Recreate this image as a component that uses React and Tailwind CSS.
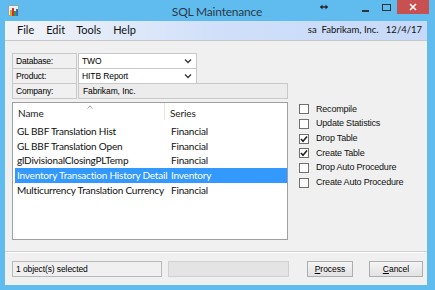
import React from "react";

const ui = { fontFamily: '"Liberation Sans", Arial, sans-serif' };
const seg = { fontFamily: 'Lato, "Noto Sans", sans-serif' };

function Check({ checked, label }) {
  return (
    <div className="flex items-center h-[14.7px]">
      <div className="w-[10px] h-[10px] border border-[#707070] bg-white flex items-center justify-center">
        {checked && (
          <svg width="8" height="8" viewBox="0 0 8 8">
            <path d="M1 4 L3 6.3 L7 1.4" stroke="#222" strokeWidth="1.6" fill="none" />
          </svg>
        )}
      </div>
      <span className="ml-[7px] text-[9px] text-[#111] tracking-[-0.2px]">{label}</span>
    </div>
  );
}

function Chevron() {
  return (
    <svg width="8" height="6" viewBox="0 0 8 6" className="mr-[4px]">
      <path d="M1 1.5 L4 4.5 L7 1.5" stroke="#333" strokeWidth="1.3" fill="none" />
    </svg>
  );
}

const lbl = "w-[65px] border border-[#c8c8c8] text-[8.5px] tracking-[-0.2px] pl-[3px] flex items-center";

export default function App() {
  const rows = [
    ["GL BBF Translation Hist", "Financial"],
    ["GL BBF Translation Open", "Financial"],
    ["glDivisionalClosingPLTemp", "Financial"],
    ["Inventory Transaction History Detail", "Inventory", true],
    ["Multicurrency Translation Currency", "Financial"],
  ];
  return (
    <div className="w-[435px] h-[290px] bg-[#60bcef] flex flex-col overflow-hidden" style={ui}>
      {/* title bar */}
      <div className="h-[21px] flex items-start relative shrink-0">
        <div className="mt-[5px] ml-[8px] w-[11px] h-[11px] relative">
          <div className="absolute inset-0 bg-[#e8eef5] border border-[#8aa]" />
          <div className="absolute left-[2px] bottom-0 w-[2px] h-[6px] bg-[#e0a020]" />
          <div className="absolute left-[4px] bottom-0 w-[2px] h-[8px] bg-[#d03030]" />
          <div className="absolute left-[6px] bottom-0 w-[2px] h-[5px] bg-[#30a040]" />
          <div className="absolute left-[8px] bottom-0 w-[2px] h-[7px] bg-[#3070d0]" />
        </div>
        <div className="w-[154px] ml-[121px] text-center text-[12px] tracking-[-0.2px] text-[#2b3a4a] mt-[3px]" style={seg}>SQL Maintenance</div>
        <div className="ml-[26px] mt-[4px]">
          <svg width="8" height="6" viewBox="0 0 8 6">
            <path d="M0.5 3 L7.5 3" stroke="#222" strokeWidth="1.4" />
            <path d="M0 3 L2.5 0.5 L2.5 5.5 Z M8 3 L5.5 0.5 L5.5 5.5 Z" fill="#222" />
          </svg>
        </div>
        <div className="ml-[34px] w-[7px] h-[2px] bg-[#333] mt-[10px]" />
        <div className="ml-[13px] w-[9px] h-[7px] border border-[#333] mt-[4px]" />
        <div className="ml-[6px] w-[32px] h-[14px] bg-[#c75050] flex items-center justify-center">
          <svg width="8" height="8" viewBox="0 0 8 8">
            <path d="M1 1 L7 7 M7 1 L1 7" stroke="white" strokeWidth="1.6" />
          </svg>
        </div>
      </div>

      {/* client */}
      <div className="ml-[5px] mr-[8px] h-[264px] bg-[#f0f0f0] flex flex-col">
        {/* menu */}
        <div className="h-[20px] bg-gradient-to-r from-[#f3f4f7] via-[#d0e0fa] to-[#c6d9f8] flex items-center border-b border-[#c8c8c8] text-[11px] text-[#111]" style={seg}>
          <span className="ml-[12px]">File</span>
          <span className="ml-[12px]">Edit</span>
          <span className="ml-[11px]">Tools</span>
          <span className="ml-[12px]">Help</span>
          <span className="ml-auto mr-[5px] text-[9.5px]">sa&nbsp;&nbsp;Fabrikam, Inc.&nbsp;&nbsp;&nbsp;12/4/17</span>
        </div>

        <div className="flex mt-[12px] ml-[7px]">
          {/* left column */}
          <div className="w-[276px] flex flex-col">
            <div className="flex h-[16px]">
              <div className={lbl}>Database:</div>
              <div className="w-[119px] ml-[1px] border border-[#c8c8c8] bg-white text-[8.5px] tracking-[-0.1px] pl-[3px] flex items-center justify-between">TWO<Chevron /></div>
            </div>
            <div className="flex h-[16px] -mt-px">
              <div className={lbl}>Product:</div>
              <div className="w-[119px] ml-[1px] border border-[#c8c8c8] bg-white text-[8.5px] tracking-[-0.1px] pl-[3px] flex items-center justify-between">HITB Report<Chevron /></div>
            </div>
            <div className="flex h-[16px] -mt-px">
              <div className={lbl}>Company:</div>
              <div className="flex-1 ml-[1px] border border-[#c8c8c8] bg-[#ececec] text-[8.5px] tracking-[-0.1px] pl-[4px] flex items-center">Fabrikam, Inc.</div>
            </div>

            {/* list */}
            <div className="mt-[3px] h-[138px] border border-[#a0a0a0] bg-white flex flex-col" style={seg}>
              <div className="h-[17px] flex text-[10px] tracking-[-0.1px] text-[#222] relative">
                <div className="w-[152px] pl-[5px] pt-[3px] border-r border-[#e6e6e6]">Name</div>
                <div className="pl-[5px] pt-[3px]">Series</div>
                <svg className="absolute left-[74px] top-[2px]" width="6" height="4" viewBox="0 0 6 4">
                  <path d="M0.5 3.5 L3 0.8 L5.5 3.5" stroke="#999" fill="none" />
                </svg>
              </div>
              <div className="mt-[4px] flex flex-col">
                {rows.map(([n, s, sel]) => (
                  <div
                    key={n}
                    className={
                      "h-[14.7px] flex items-center text-[10px] tracking-[-0.2px] ml-[2px] " +
                      (sel ? "bg-[#3399ff] text-white" : "text-[#111]")
                    }
                  >
                    <div className="w-[155px] pl-[2px] whitespace-nowrap">{n}</div>
                    <div className="pl-[1px]">{s}</div>
                  </div>
                ))}
              </div>
            </div>
          </div>

          {/* right column */}
          <div className="ml-[11px] mt-[49px] flex flex-col">
            <Check label="Recompile" />
            <Check label="Update Statistics" />
            <Check checked label="Drop Table" />
            <Check checked label="Create Table" />
            <Check label="Drop Auto Procedure" />
            <Check label="Create Auto Procedure" />
          </div>
        </div>

        {/* separator */}
        <div className="mt-[11px] border-t border-[#d0d0d0] border-b-white border-b h-0" />

        {/* bottom */}
        <div className="flex mt-[8px] ml-[7px] h-[16px] items-stretch">
          <div className="w-[150px] border border-[#b8b8b8] bg-[#f0f0f0] text-[8.5px] tracking-[-0.1px] pl-[3px] flex items-center">1 object(s) selected</div>
          <div className="w-[121px] ml-[6px] border border-[#d0d0d0] bg-[#e4e4e4]" />
          <div className="w-[46px] ml-[18px] border border-[#adadad] bg-gradient-to-b from-[#f4f4f4] to-[#e2e2e2] text-[8.5px] flex items-center justify-center">
            <span><u>P</u>rocess</span>
          </div>
          <div className="w-[54px] ml-[16px] border border-[#adadad] bg-gradient-to-b from-[#f4f4f4] to-[#e2e2e2] text-[8.5px] flex items-center justify-center">
            <span><u>C</u>ancel</span>
          </div>
        </div>
      </div>
    </div>
  );
}
